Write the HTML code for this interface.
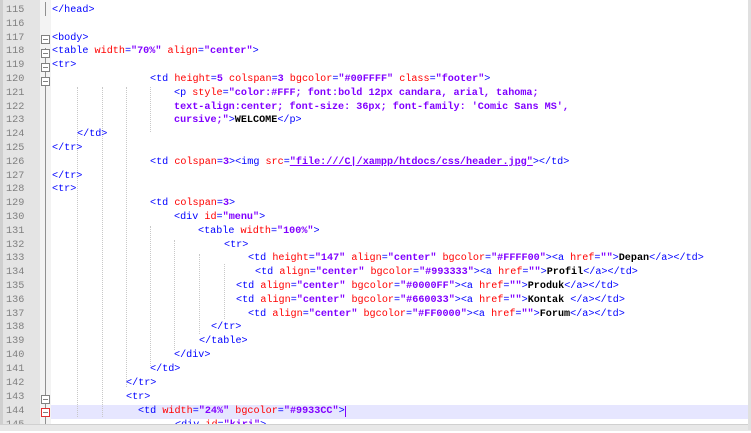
<!DOCTYPE html>
<html><head><meta charset="utf-8"><style>
body{margin:0;width:751px;height:430px;overflow:hidden;background:#fff;position:relative;font-family:"Liberation Mono",monospace;}
.wrap{position:absolute;left:0;top:1.5px;width:751px;height:430px}
.gut{position:absolute;left:0;top:0;width:40px;height:430px;background:#e4e4e4;border-left:3px solid #cfcfcf;box-sizing:border-box}
.fold{position:absolute;left:40px;top:0;width:11px;height:430px;background:#f3f3f3}
.ln{position:absolute;left:6px;width:30px;font-size:10.2px;color:#808080;line-height:14px}
.c{position:absolute;font-size:10.15px;line-height:14px;white-space:pre;color:#0000ff}
.a{color:#ff0000}.v{color:#8000ff;font-weight:bold}.t{color:#000;font-weight:bold}
.box{position:absolute;left:41px;width:7px;height:7px;border:1px solid #808080;background:#fff}
.box:after{content:"";position:absolute;left:1px;top:3px;width:5px;height:1px;background:#808080}
.g{position:absolute;border-left:1px dotted #c8c8c8}
.hl{position:absolute;left:51px;top:403px;width:697px;height:14px;background:#e6e6ff}
.sb{position:absolute;left:0;top:424px;width:751px;height:6px;background:#e8e8e8;border-top:1px solid #d0d0d0}
.vline{position:absolute;left:45px;width:1px;background:#909090}
</style></head><body>
<div class="gut"></div><div class="fold"></div>
<div class="wrap">
<div class="hl"></div>
<div class="vline" style="top:0;height:14px"></div>
<div class="vline" style="top:46px;height:380px"></div>
<div class="box" style="top:33px"></div>
<div class="box" style="top:47px"></div>
<div class="box" style="top:61px"></div>
<div class="box" style="top:75px"></div>
<div class="box" style="top:393px"></div>
<div class="box" style="top:406px;border-color:#e03030"></div>
<div class="g" style="left:77px;top:85px;height:330px"></div>
<div class="g" style="left:102px;top:85px;height:330px"></div>
<div class="g" style="left:126px;top:85px;height:300px"></div>
<div class="g" style="left:150px;top:85px;height:45px"></div>
<div class="g" style="left:150px;top:224px;height:140px"></div>
<div class="g" style="left:174px;top:238px;height:110px"></div>
<div class="g" style="left:199px;top:252px;height:80px"></div>
<div class="g" style="left:224px;top:262px;height:55px"></div>
<div class="ln" style="top:2px">115</div><div class="c" style="left:52px;top:2px">&lt;/head&gt;</div>
<div class="ln" style="top:16px">116</div>
<div class="ln" style="top:30px">117</div><div class="c" style="left:52px;top:30px">&lt;body&gt;</div>
<div class="ln" style="top:43px">118</div><div class="c" style="left:52px;top:43px">&lt;table <span class="a">width</span>=<span class="v">"70%"</span> <span class="a">align</span>=<span class="v">"center"</span>&gt;</div>
<div class="ln" style="top:57px">119</div><div class="c" style="left:52px;top:57px">&lt;tr&gt;</div>
<div class="ln" style="top:71px">120</div><div class="c" style="left:150px;top:71px">&lt;td <span class="a">height</span>=<span class="v">5</span> <span class="a">colspan</span>=<span class="v">3</span> <span class="a">bgcolor</span>=<span class="v">"#00FFFF"</span> <span class="a">class</span>=<span class="v">"footer"</span>&gt;</div>
<div class="ln" style="top:85px">121</div><div class="c" style="left:174px;top:85px">&lt;p <span class="a">style</span>=<span class="v">"color:#FFF; font:bold 12px candara, arial, tahoma;</span></div>
<div class="ln" style="top:99px">122</div><div class="c" style="left:174px;top:99px"><span class="v">text-align:center; font-size: 36px; font-family: 'Comic Sans MS',</span></div>
<div class="ln" style="top:112px">123</div><div class="c" style="left:174px;top:112px"><span class="v">cursive;"</span>&gt;<span class="t">WELCOME</span>&lt;/p&gt;</div>
<div class="ln" style="top:126px">124</div><div class="c" style="left:77px;top:126px">&lt;/td&gt;</div>
<div class="ln" style="top:140px">125</div><div class="c" style="left:52px;top:140px">&lt;/tr&gt;</div>
<div class="ln" style="top:154px">126</div><div class="c" style="left:150px;top:154px">&lt;td <span class="a">colspan</span>=<span class="v">3</span>&gt;&lt;img <span class="a">src</span>=<span class="v" style="text-decoration:underline">"file:///C|/xampp/htdocs/css/header.jpg"</span>&gt;&lt;/td&gt;</div>
<div class="ln" style="top:168px">127</div><div class="c" style="left:52px;top:168px">&lt;/tr&gt;</div>
<div class="ln" style="top:181px">128</div><div class="c" style="left:52px;top:181px">&lt;tr&gt;</div>
<div class="ln" style="top:195px">129</div><div class="c" style="left:150px;top:195px">&lt;td <span class="a">colspan</span>=<span class="v">3</span>&gt;</div>
<div class="ln" style="top:209px">130</div><div class="c" style="left:174px;top:209px">&lt;div <span class="a">id</span>=<span class="v">"menu"</span>&gt;</div>
<div class="ln" style="top:223px">131</div><div class="c" style="left:198px;top:223px">&lt;table <span class="a">width</span>=<span class="v">"100%"</span>&gt;</div>
<div class="ln" style="top:237px">132</div><div class="c" style="left:224px;top:237px">&lt;tr&gt;</div>
<div class="ln" style="top:250px">133</div><div class="c" style="left:248px;top:250px">&lt;td <span class="a">height</span>=<span class="v">"147"</span> <span class="a">align</span>=<span class="v">"center"</span> <span class="a">bgcolor</span>=<span class="v">"#FFFF00"</span>&gt;&lt;a <span class="a">href</span>=<span class="v">""</span>&gt;<span class="t">Depan</span>&lt;/a&gt;&lt;/td&gt;</div>
<div class="ln" style="top:264px">134</div><div class="c" style="left:255px;top:264px">&lt;td <span class="a">align</span>=<span class="v">"center"</span> <span class="a">bgcolor</span>=<span class="v">"#993333"</span>&gt;&lt;a <span class="a">href</span>=<span class="v">""</span>&gt;<span class="t">Profil</span>&lt;/a&gt;&lt;/td&gt;</div>
<div class="ln" style="top:278px">135</div><div class="c" style="left:236px;top:278px">&lt;td <span class="a">align</span>=<span class="v">"center"</span> <span class="a">bgcolor</span>=<span class="v">"#0000FF"</span>&gt;&lt;a <span class="a">href</span>=<span class="v">""</span>&gt;<span class="t">Produk</span>&lt;/a&gt;&lt;/td&gt;</div>
<div class="ln" style="top:292px">136</div><div class="c" style="left:236px;top:292px">&lt;td <span class="a">align</span>=<span class="v">"center"</span> <span class="a">bgcolor</span>=<span class="v">"#660033"</span>&gt;&lt;a <span class="a">href</span>=<span class="v">""</span>&gt;<span class="t">Kontak </span>&lt;/a&gt;&lt;/td&gt;</div>
<div class="ln" style="top:306px">137</div><div class="c" style="left:248px;top:306px">&lt;td <span class="a">align</span>=<span class="v">"center"</span> <span class="a">bgcolor</span>=<span class="v">"#FF0000"</span>&gt;&lt;a <span class="a">href</span>=<span class="v">""</span>&gt;<span class="t">Forum</span>&lt;/a&gt;&lt;/td&gt;</div>
<div class="ln" style="top:319px">138</div><div class="c" style="left:211px;top:319px">&lt;/tr&gt;</div>
<div class="ln" style="top:333px">139</div><div class="c" style="left:199px;top:333px">&lt;/table&gt;</div>
<div class="ln" style="top:347px">140</div><div class="c" style="left:174px;top:347px">&lt;/div&gt;</div>
<div class="ln" style="top:361px">141</div><div class="c" style="left:150px;top:361px">&lt;/td&gt;</div>
<div class="ln" style="top:375px">142</div><div class="c" style="left:126px;top:375px">&lt;/tr&gt;</div>
<div class="ln" style="top:389px">143</div><div class="c" style="left:126px;top:389px">&lt;tr&gt;</div>
<div class="ln" style="top:403px">144</div><div class="c" style="left:138px;top:403px">&lt;td <span class="a">width</span>=<span class="v">"24%"</span> <span class="a">bgcolor</span>=<span class="v">"#9933CC"</span>&gt;<span style="border-left:1px solid #8000ff"></span></div>
<div class="ln" style="top:417px">145</div><div class="c" style="left:175px;top:417px">&lt;div <span class="a">id</span>=<span class="v">"kiri"</span>&gt;</div>
</div>
<div class="sb"></div>
<div style="position:absolute;left:748px;top:0;width:3px;height:430px;background:#e0e0e0"></div>
</body></html>
